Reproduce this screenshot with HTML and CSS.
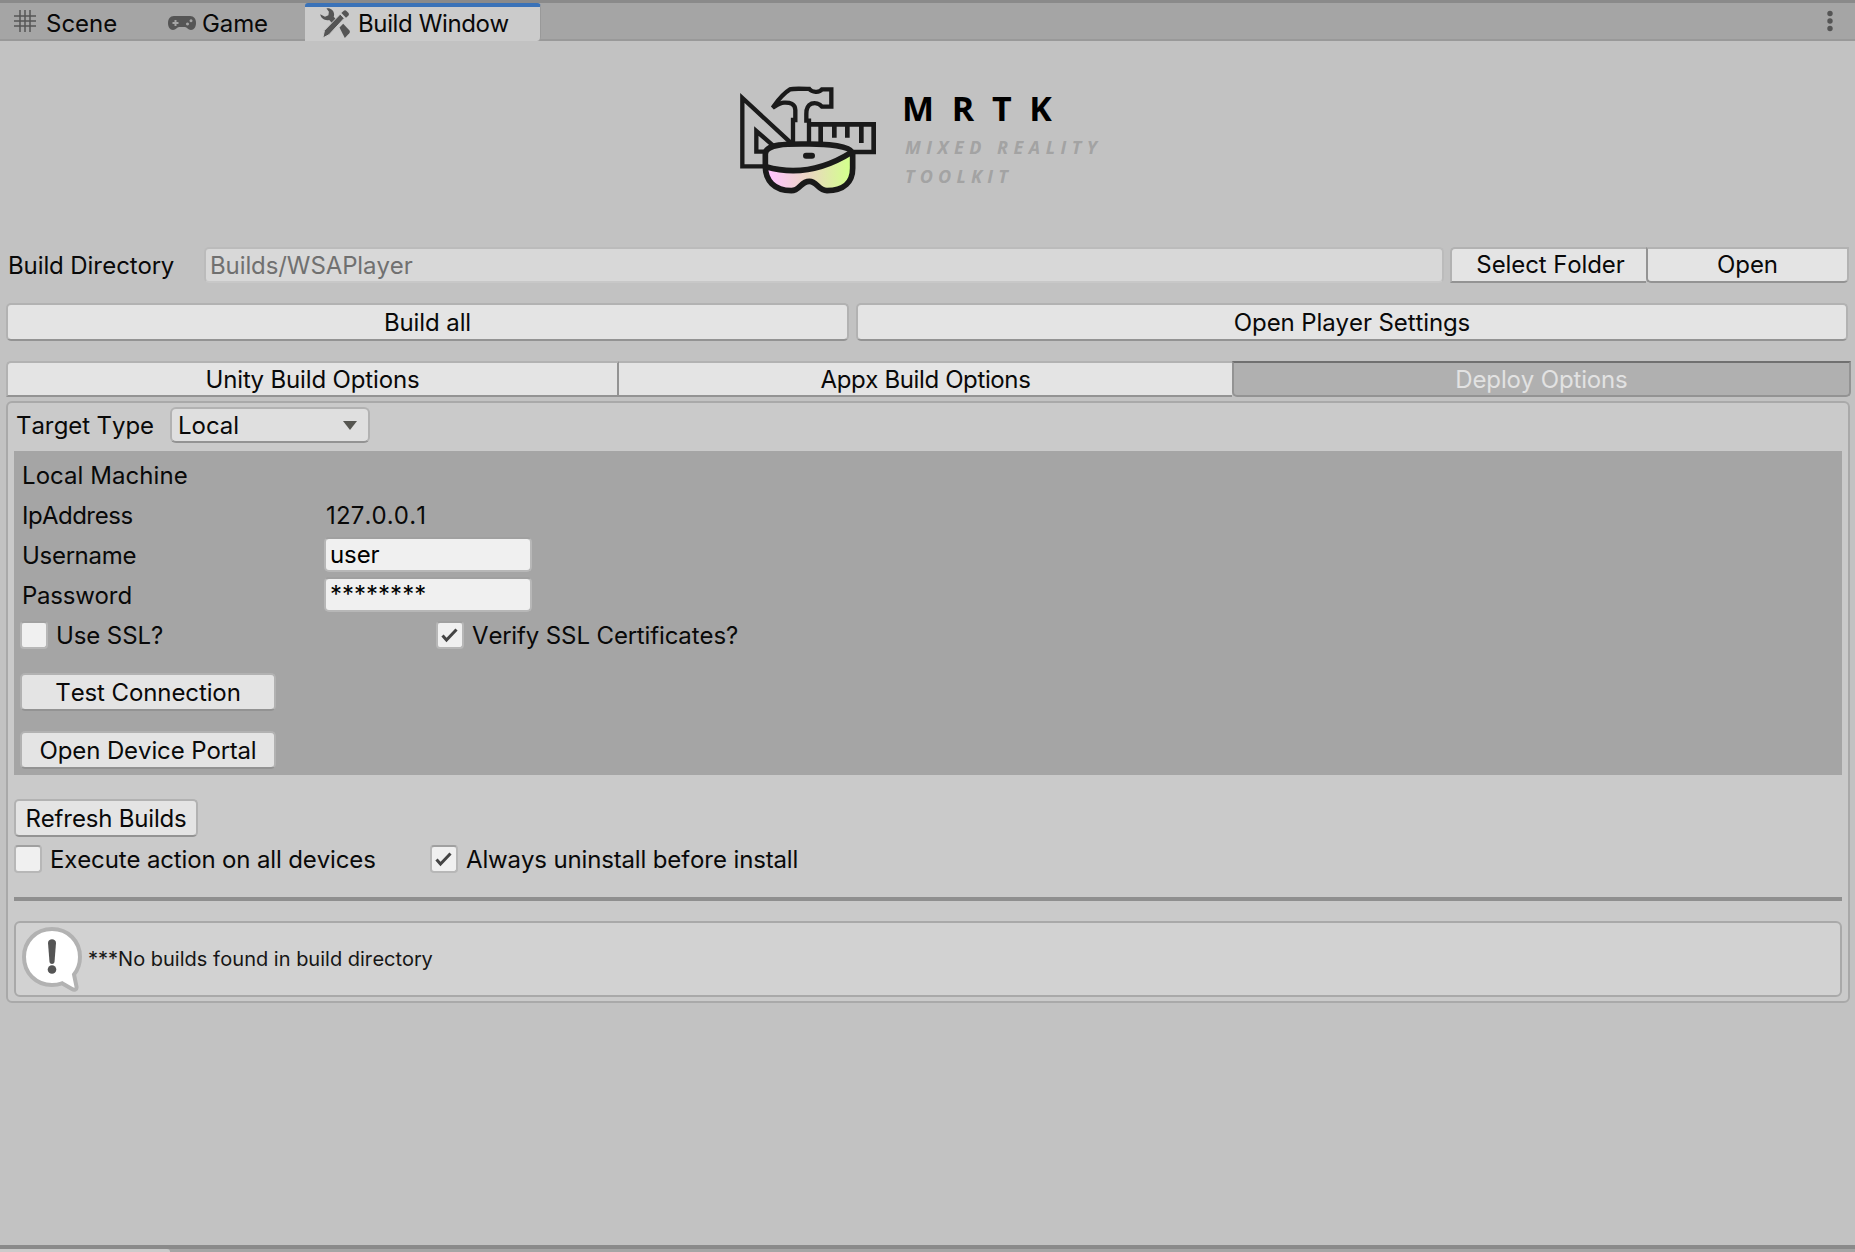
FILE: index.html
```html
<!DOCTYPE html>
<html lang="en">
<head>
<meta charset="utf-8">
<title>Build Window</title>
<link rel="stylesheet" href="styles.css">
</head>
<body>
<div class="window">
  <header class="tabbar">
    <div class="tab tab-scene">
      <svg class="icon" width="22" height="22" viewBox="0 0 22 22"><path d="M6 0v22M11 0v22M16 0v22M0 6h22M0 11h22M0 16h22" stroke="#555" stroke-width="1.500" fill="none"/></svg>
      <span>Scene</span>
    </div>
    <div class="tab tab-game">
      <svg class="icon" width="28" height="14" viewBox="0 0 28 14"><path fill="#555" fill-rule="evenodd" d="M6 0h16c4 0 6 3 6 7s-2 7-5 7c-3 0-4-3-6-3h-6c-2 0-3 3-6 3-3 0-5-3-5-7s2-7 6-7zM6.500 4v2h-2v2h2v2h2V8h2V6h-2V4zM23 3.200a1.500 1.500 0 1 0 .01 0zM19.500 6.500a1.500 1.500 0 1 0 .01 0z"/></svg>
      <span>Game</span>
    </div>
    <div class="tab tab-build active">
      <svg class="icon" width="30" height="31" viewBox="0 0 30 31"><g fill="#555"><path d="M6.500.4c3.800-.8 7.400 2 7.600 5.800 0 1-.1 1.800-.4 2.600l2.300 2.500-3.800 4-3-3.300C5 13 .9 10.500.2 6.300L5 8.800l3.400-1.500.5-3.500z"/><path d="M19.500 19l3.700-3.800 6.100 6.600c.8.9.8 2 0 2.900l-4.500 4.800z" transform="translate(0 .5)"/><path d="M4.500 22.300L20.200 6.200l4 4.100L9 26.700 2.800 30z" stroke="#cbcbcb" stroke-width="1"/><path d="M21.400 5l2.100-2c1-.9 2.100-.9 3 0l1.800 1.800c.9.9.8 2 0 3l-2.300 2z"/></g></svg>
      <span>Build Window</span>
    </div>
    <svg class="menu" width="6" height="24" viewBox="0 0 6 24"><g fill="#555"><circle cx="3" cy="4.500" r="2.700"/><circle cx="3" cy="12" r="2.700"/><circle cx="3" cy="19.500" r="2.700"/></g></svg>
  </header>

  <main class="content">
    <section class="brand">
      <svg width="160" height="130" viewBox="0 0 480 390">
        <defs><linearGradient id="visor"><stop offset="0.050" stop-color="#ffc4ff"/><stop offset=".5" stop-color="#ead7c0"/><stop offset=".95" stop-color="#d4ff8e"/></linearGradient></defs>
        <g fill="none" stroke="#1a1a1a" stroke-width="13">
          <path d="M182 203L37 69V274H106M132 214L79 168V230H106"/>
          <path d="M237 148H431V231H368M272 148V202M313 150V188M352 150V188M394 150V204" stroke-width="14"/>
          <path d="M189 204V135H196V105C196 86 180 82 162 83C149 84 143 89 128 98C138 84 155 58 180 43C190 40 210 41 238 42C246 52 268 54 276 43H304V95H276C269 86 256 82 244 86C230 92 229 104 229 116V137H237V204"/>
          <path d="M106 266Q230 315 368 226V280C368 320 343 347 297 347C264 347 264 319 238 319C210 319 210 347 177 347C132 347 106 316 106 274Z" fill="url(#visor)" stroke="none"/>
          <path d="M106 275V237C106 203 188 207 238 207C281 207 368 211 368 237V280C368 320 343 347 291 347C264 347 262 319 238 319C212 319 210 347 184 347C132 347 106 316 106 274" stroke-width="17"/>
          <path d="M108 275Q237 312 364 232" stroke-width="17"/>
          <path d="M228 242H246" stroke-width="18" stroke-linecap="round"/>
        </g>
      </svg>
      <div class="brand-text">
        <div class="brand-name">MRTK</div>
        <div class="brand-sub">MIXED REALITY</div>
        <div class="brand-sub second">TOOLKIT</div>
      </div>
    </section>

    <section class="directory">
      <span class="dir-label">Build Directory</span>
      <div class="dir-field">Builds/WSAPlayer</div>
      <div class="button select">Select Folder</div>
      <div class="button open">Open</div>
    </section>

    <section class="actions">
      <div class="button build-all">Build all</div>
      <div class="button settings">Open Player Settings</div>
    </section>

    <nav class="modes">
      <div class="button mode-first">Unity Build Options</div>
      <div class="button mode-mid">Appx Build Options</div>
      <div class="button mode-on">Deploy Options</div>
    </nav>

    <section class="panel">
      <div class="target">
        <span>Target Type</span>
        <div class="dropdown"><span>Local</span><svg width="14" height="9" viewBox="0 0 14 9"><path d="M0 0h14L7 9z" fill="#555550"/></svg></div>
      </div>

      <div class="device">
        <div class="row"><span class="loose">Local Machine</span></div>
        <div class="row"><span class="key ip">IpAddress</span><span class="value">127.0.0.1</span></div>
        <div class="row"><span class="key">Username</span><div class="field">user</div></div>
        <div class="row"><span class="key">Password</span><div class="field secret">********</div></div>
        <div class="row checks">
          <div class="check"><i class="box"></i><span>Use SSL?</span></div>
          <div class="check"><i class="box"><svg width="17" height="15" viewBox="0 0 17 15"><path d="M1.500 7.500L5.500 12 15.500 1.500" fill="none" stroke="#444" stroke-width="3"/></svg></i><span>Verify SSL Certificates?</span></div>
        </div>
        <div class="button wide">Test Connection</div>
        <div class="button wide">Open Device Portal</div>
      </div>

      <div class="button refresh">Refresh Builds</div>
      <div class="checks install">
        <div class="check"><i class="box"></i><span>Execute action on all devices</span></div>
        <div class="check"><i class="box"><svg width="17" height="15" viewBox="0 0 17 15"><path d="M1.500 7.500L5.500 12 15.500 1.500" fill="none" stroke="#444" stroke-width="3"/></svg></i><span>Always uninstall before install</span></div>
      </div>
      <div class="rule"></div>
      <div class="help">
        <svg width="60" height="65" viewBox="0 0 60 65"><path d="M30 2C14 2 2 14 2 30s12 28 28 28c3.500 0 7-.6 10-1.700L50 62c2.500 1.500 5 .5 4.500-2.500L52 47.500C56 42.500 58 36.500 58 30 58 14 46 2 30 2z" fill="#fff" stroke="#b2b2b2" stroke-width="4"/><path d="M26 16c0-5 8-5 8 0l-1.500 19c-.3 2.500-4.700 2.500-5 0z" fill="#555"/><circle cx="30" cy="42.500" r="4.300" fill="#555"/></svg>
        <span>***No builds found in build directory</span>
      </div>
    </section>
  </main>

  <footer class="bottom"><div class="bottom-tab"></div></footer>
</div>
</body>
</html>
```
FILE: styles.css
```css
* { box-sizing: border-box; }

body {
  margin: 0;
  background: #c2c2c2;
  color: #090909;
  font: 24px/28px Inter, "Liberation Sans", sans-serif;
  font-kerning: none;
  letter-spacing: -0.1px;
  white-space: nowrap;
}

.window { display: flex; flex-direction: column; width: 1855px; height: 1252px; overflow: hidden; }

.tabbar {
  display: flex;
  flex: none;
  height: 41px;
  border-top: 3px solid #8a8a8a;
  background: linear-gradient(#a5a5a5 36px, #999 36px);
}
.tab { display: flex; align-items: center; padding-bottom: 2px; }
.tab .icon { flex: none; }
.tab span { padding-top: 5px; }
.tab-scene { width: 154px; padding-left: 14px; gap: 10px; letter-spacing: 0; }
.tab-game { width: 151px; padding-left: 14px; gap: 6px; }
.tab-game .icon { margin-top: 3px; }
.tab-build { width: 236px; padding-left: 15px; gap: 8px; letter-spacing: -0.38px; }
.tab.active { border-top: 4px solid #3a72b8; border-radius: 3px 4px 4px 0; background: #cbcbcb; padding-bottom: 2px; border-right: 1px solid #999; }
.tab.active span { padding-top: 2px; }
.menu { margin: 6px 22px 0 auto; }

.content { flex: 1; }

.brand { display: flex; height: 206px; padding: 34px 0 0 730px; }
.brand-text { padding: 13px 0 0 12px; font-family: "Open Sans", "Noto Sans", sans-serif; font-weight: 700; }
.brand-name { height: 42px; line-height: 41px; font-size: 34px; letter-spacing: 17.700px; color: #000; }
.brand-sub { height: 29px; line-height: 35px; font-size: 18px; letter-spacing: 5.500px; font-style: italic; color: #a3a3a3; padding-left: 3px; }
.brand-sub.second { letter-spacing: 5.200px; }

.button {
  display: flex;
  align-items: center;
  justify-content: center;
  border: 2px solid #b2b2b2;
  border-bottom-color: #939393;
  border-radius: 5px;
  background: #e4e4e4;
}

.directory { display: flex; height: 36px; padding-left: 8px; }
.dir-label { width: 196px; padding-top: 5px; }
.dir-field { width: 1240px; padding: 3px 0 0 4px; border: 2px solid #bbb; border-bottom-color: #c8c8c8; border-radius: 5px; background: #d8d8d8; color: #707070; }
.select { width: 196px; margin-left: 6px; border-right: 0; border-radius: 5px 0 0 0; padding-left: 3px; }
.open { width: 203px; border-left-color: #939393; border-radius: 0 0 5px 5px; }

.actions { display: flex; gap: 7px; height: 38px; margin: 20px 0 20px 6px; }
.actions .button, .modes .button { padding-top: 1px; }
.build-all { width: 843px; }
.settings { width: 992px; }

.modes { display: flex; height: 36px; margin-left: 6px; letter-spacing: -0.150px; }
.mode-first { width: 613px; border-right-color: #939393; border-radius: 5px 0 0 0; }
.mode-mid { width: 613px; border-left: 0; border-right: 0; border-radius: 0; letter-spacing: -0.380px; }
.mode-on { width: 619px; border-color: #707070 #939393 #939393 #939393; border-radius: 0 0 5px 5px; background: #b0b0b0; color: #e2e2e2; }

.panel { width: 1844px; height: 602px; margin: 4px 0 0 6px; padding: 0 6px; border: 2px solid #a9a9a9; border-radius: 6px; background: #cacaca; }
.target { display: flex; height: 48px; padding: 4px 0 0 2px; line-height: 37px; }
.target > span { width: 154px; }
.dropdown { display: flex; align-items: center; justify-content: space-between; width: 200px; height: 36px; padding: 0 11px 0 6px; border: 2px solid #b2b2b2; border-bottom-color: #939393; border-radius: 6px; background: #dfdfdf; letter-spacing: 0; line-height: 35px; }

.device { height: 324px; padding: 5px 6px 0; background: #a5a5a5; }
.row { display: flex; align-items: center; height: 40px; padding-left: 2px; }
.loose { letter-spacing: 0.080px; }
.key { width: 302px; letter-spacing: -0.250px; }
.key.ip { letter-spacing: -0.550px; }
.value { padding-left: 2px; letter-spacing: 0.150px; }
.field { width: 208px; height: 35px; margin-bottom: 3px; padding: 2px 0 0 4px; border: 2px solid #b7b7b7; border-top-color: #a0a0a0; border-radius: 5px; background: #f0f0f0; color: #000; }
.secret { letter-spacing: 0; }
.checks { display: flex; }
.row.checks { padding-left: 0; }
.check { display: flex; align-items: center; width: 416px; gap: 8px; }
.box { display: flex; align-items: center; justify-content: center; width: 28px; height: 28px; border: 2px solid #b7b7b7; border-top-color: #a0a0a0; border-radius: 4px; background: #f0f0f0; }
.box svg { margin-right: 1px; }
.row .box { margin-bottom: 2px; }
.wide { width: 256px; height: 38px; margin: 17px 0 20px; padding-top: 1px; }
.wide + .wide { margin-bottom: 0; }

.refresh { width: 184px; height: 38px; margin-top: 24px; padding-top: 1px; letter-spacing: -0.2px; }
.install { height: 28px; margin-top: 8px; letter-spacing: -0.14px; }
.install span { padding-top: 1px; }
.rule { height: 4px; margin-top: 24px; background: #8f8f8f; }
.help { display: flex; align-items: center; gap: 6px; height: 76px; margin-top: 20px; padding-left: 6px; border: 2px solid #a9a9a9; border-radius: 6px; background: #d2d2d2; color: #161616; font-size: 20px; letter-spacing: 0; }

.bottom { flex: none; height: 7px; border-top: 4px solid #8a8a8a; background: #a5a5a5; }
.bottom-tab { width: 170px; height: 3px; border-top-right-radius: 3px; background: #cbcbcb; }
```
